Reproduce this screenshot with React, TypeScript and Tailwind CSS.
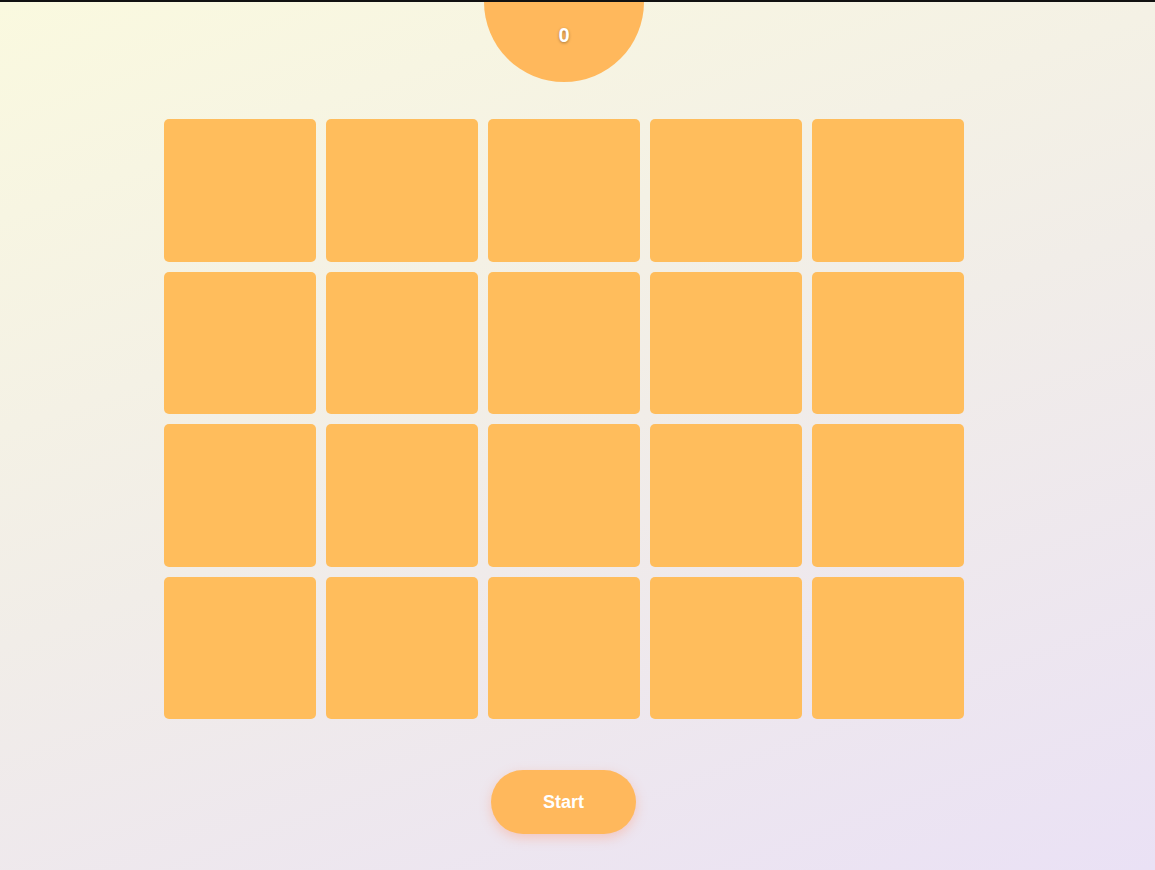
import { useState } from "react";

export default function App() {
  const [score] = useState(0);
  const tiles = Array.from({ length: 20 }, (_, i) => i);

  return (
    <div
      className="min-h-[870px] w-full border-t-2 border-[#111] bg-[linear-gradient(160deg,#faf9df_0%,#f1ede8_50%,#eae1f5_100%)] overflow-hidden"
      style={{ fontFamily: '"Liberation Sans", Arial, sans-serif' }}
    >
      <div className="w-[1128px] flex flex-col items-center">
        {/* SCORE BUBBLE */}
        <div className="-mt-[80px] w-[160px] h-[160px] rounded-full bg-[#ffb85c] flex items-end justify-center pb-[32px]">
          <span className="text-white text-[20px] font-bold [text-shadow:0_1px_3px_rgba(0,0,0,0.35)]">
            {score}
          </span>
        </div>

        {/* TILES */}
        <div className="mt-[37px] grid grid-cols-5 gap-[10px] w-[800px]">
          {tiles.map((t) => (
            <div key={t} className="h-[142.5px] rounded-[5px] bg-[#ffbd5c]" />
          ))}
        </div>

        {/* START */}
        <button className="mt-[51px] -ml-[1px] w-[145px] h-[64px] rounded-full bg-[#ffb85c] text-white text-[18px] font-bold shadow-[0_4px_12px_rgba(255,140,100,0.35)]">
          Start
        </button>
      </div>
    </div>
  );
}
